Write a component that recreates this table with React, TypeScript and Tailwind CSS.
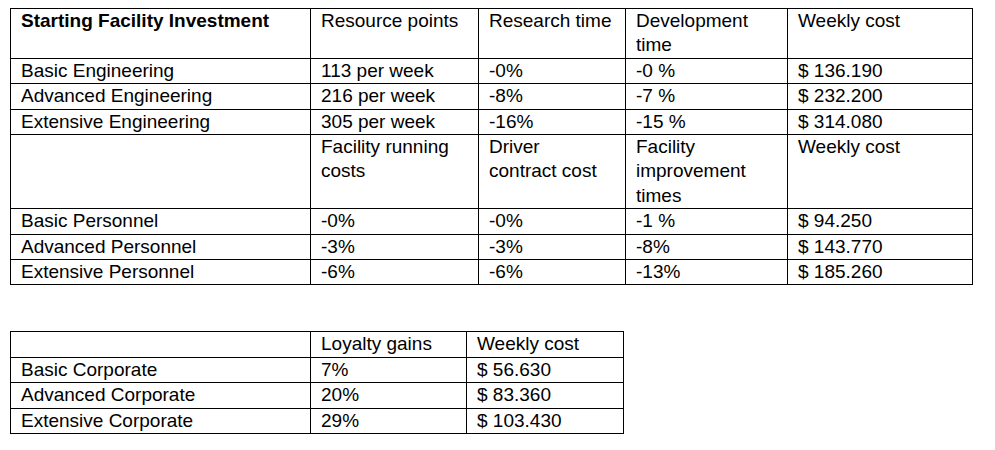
const engineering = [
  ["Basic Engineering", "113 per week", "-0%", "-0 %", "$ 136.190"],
  ["Advanced Engineering", "216 per week", "-8%", "-7 %", "$ 232.200"],
  ["Extensive Engineering", "305 per week", "-16%", "-15 %", "$ 314.080"],
]

const personnel = [
  ["Basic Personnel", "-0%", "-0%", "-1 %", "$ 94.250"],
  ["Advanced Personnel", "-3%", "-3%", "-8%", "$ 143.770"],
  ["Extensive Personnel", "-6%", "-6%", "-13%", "$ 185.260"],
]

const corporate = [
  ["Basic Corporate", "7%", "$ 56.630"],
  ["Advanced Corporate", "20%", "$ 83.360"],
  ["Extensive Corporate", "29%", "$ 103.430"],
]

function Cell({ children, bold }: { children?: React.ReactNode; bold?: boolean }) {
  return (
    <td className={`border border-black pl-[10px] pr-1 py-0 align-top ${bold ? "font-bold" : ""}`}>
      {children}
    </td>
  )
}

export default function App() {
  return (
    <div
      className="min-h-screen bg-white text-black text-[19px] leading-[24.4px] pt-2 pl-[10px]"
      style={{ fontFamily: '"Liberation Sans", Arial, sans-serif' }}
    >
      <table className="border-collapse table-fixed w-[962px]">
        <colgroup>
          <col className="w-[300px]" />
          <col className="w-[168px]" />
          <col className="w-[147px]" />
          <col className="w-[162px]" />
          <col className="w-[185px]" />
        </colgroup>
        <tbody>
          <tr>
            <Cell bold>Starting Facility Investment</Cell>
            <Cell>Resource points</Cell>
            <Cell>Research time</Cell>
            <Cell>
              Development
              <br />
              time
            </Cell>
            <Cell>Weekly cost</Cell>
          </tr>
          {engineering.map((row) => (
            <tr key={row[0]}>
              {row.map((c, i) => (
                <Cell key={i}>{c}</Cell>
              ))}
            </tr>
          ))}
          <tr>
            <Cell />
            <Cell>
              Facility running
              <br />
              costs
            </Cell>
            <Cell>
              Driver
              <br />
              contract cost
            </Cell>
            <Cell>
              Facility
              <br />
              improvement
              <br />
              times
            </Cell>
            <Cell>Weekly cost</Cell>
          </tr>
          {personnel.map((row) => (
            <tr key={row[0]}>
              {row.map((c, i) => (
                <Cell key={i}>{c}</Cell>
              ))}
            </tr>
          ))}
        </tbody>
      </table>

      <table className="border-collapse table-fixed w-[613px] mt-[46px]">
        <colgroup>
          <col className="w-[300px]" />
          <col className="w-[156px]" />
          <col className="w-[157px]" />
        </colgroup>
        <tbody>
          <tr>
            <Cell />
            <Cell>Loyalty gains</Cell>
            <Cell>Weekly cost</Cell>
          </tr>
          {corporate.map((row) => (
            <tr key={row[0]}>
              {row.map((c, i) => (
                <Cell key={i}>{c}</Cell>
              ))}
            </tr>
          ))}
        </tbody>
      </table>
    </div>
  )
}
